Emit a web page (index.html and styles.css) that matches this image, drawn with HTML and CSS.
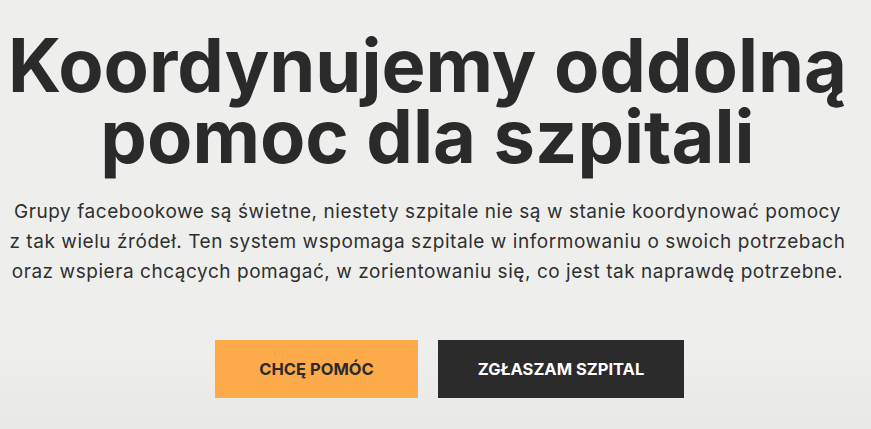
FILE: index.html
```html
<!DOCTYPE html>
<html lang="pl">
<head>
<meta charset="utf-8">
<title>Koordynujemy oddolną pomoc dla szpitali</title>
<link rel="stylesheet" href="styles.css">
</head>
<body>
<section class="hero">
  <h1 class="hero-title"><span class="line">Koordynujemy oddolną</span><span class="line">pomoc dla szpitali</span></h1>
  <p class="hero-text">Grupy facebookowe są świetne, niestety szpitale nie są w stanie koordynować pomocy<br>z tak wielu źródeł. Ten system wspomaga szpitale w informowaniu o swoich potrzebach<br>oraz wspiera chcących pomagać, w zorientowaniu się, co jest tak naprawdę potrzebne.</p>
  <div class="hero-actions">
    <a class="btn btn-orange" href="#">CHCĘ POMÓC</a>
    <a class="btn btn-dark" href="#">ZGŁASZAM SZPITAL</a>
  </div>
</section>
</body>
</html>
```

FILE: styles.css
```css
html, body {
  margin: 0;
  padding: 0;
}
body {
  background: linear-gradient(180deg, #eeefed 0%, #eeefed 82%, #e8e9e7 100%);
  height: 429px;
  overflow: hidden;
  font-family: Inter, "Noto Sans", sans-serif;
  color: #2b2b2b;
}
.hero {
  display: flex;
  flex-direction: column;
  align-items: center;
  padding: 30px 16px 0 0;
}
.hero-title {
  margin: 0;
  font-size: 74px;
  line-height: 71px;
  font-weight: 700;
  text-align: center;
  white-space: nowrap;
  color: #2a2a2a;
}
.line {
  display: block;
}
.hero-text {
  margin: 25px 0 0;
  font-size: 19px;
  line-height: 30px;
  letter-spacing: 0.55px;
  text-align: center;
  white-space: nowrap;
  color: #2f2f2f;
}
.hero-actions {
  display: flex;
  gap: 20px;
  margin: 53px 0 0 44px;
}
.btn {
  display: flex;
  align-items: center;
  justify-content: center;
  height: 58px;
  font-size: 16.5px;
  font-weight: 700;
  text-decoration: none;
}
.btn-orange {
  width: 203px;
  background: #fdab4a;
  color: #2b2b2b;
}
.btn-dark {
  width: 246px;
  background: #2b2b2b;
  color: #ffffff;
}
```
